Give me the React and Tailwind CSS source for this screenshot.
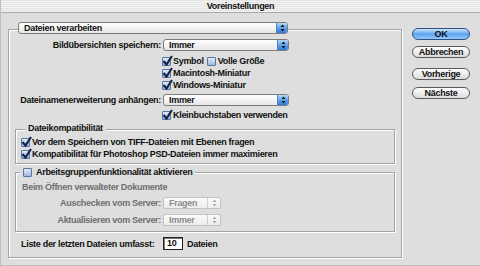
import React from 'react';

// --- Small Aqua-style controls ---
const Arrows = ({ color = '#111' }) => (
    <svg viewBox="0 0 5 8" className="w-[5px] h-[8px]">
        <path d="M2.5 0.5 L4.5 3 L0.5 3 Z" fill={color} />
        <path d="M2.5 7.5 L4.5 5 L0.5 5 Z" fill={color} />
    </svg>
);

const Popup = ({ label, width }) => (
    <div className={`flex h-[12px] ${width} rounded-[3px] border border-[#7c7c7c] bg-linear-to-b from-white to-[#e6e6e6] overflow-hidden`}>
        <span className="flex-1 pl-[5px] leading-[10px]">{label}</span>
        <span className="w-[11px] flex items-center justify-center bg-linear-to-b from-[#b7d8f8] via-[#5ea3ec] to-[#2f7ad8] border-l border-[#5d7fae]">
            <Arrows />
        </span>
    </div>
);

const DisabledPopup = ({ label }) => (
    <div className="flex h-[12px] w-[58px] rounded-[2px] border border-[#c2c2c2] bg-linear-to-b from-[#fbfbfb] to-[#ececec] overflow-hidden text-[#8c8c8c]">
        <span className="flex-1 pl-[5px] leading-[10px]">{label}</span>
        <span className="w-[13px] flex items-center justify-center border-l border-[#cfcfcf]">
            <Arrows color="#a8a8a8" />
        </span>
    </div>
);

const Check = ({ checked }) => (
    <span className="relative shrink-0 w-[9px] h-[9px] rounded-[1px] border border-[#56779f] bg-linear-to-b from-[#e3ecf9] to-[#9cb8e0]">
        {checked && (
            <svg viewBox="0 0 11 11" className="absolute -top-[3px] -left-[1px] w-[11px] h-[11px]">
                <path d="M1.5 6 L4.5 9.5 L10 1" fill="none" stroke="#14244f" strokeWidth="2.2" />
            </svg>
        )}
    </span>
);

const CheckRow = ({ checked, label }) => (
    <span className="flex items-center">
        <Check checked={checked} />
        <span className="ml-[2px] leading-[10px]">{label}</span>
    </span>
);

const Button = ({ label, primary }) => (
    <button
        className={
            primary
                ? 'h-[12px] w-[58px] rounded-full border border-[#2f4f86] bg-linear-to-b from-[#cfe6fd] via-[#5aa3ef] to-[#94c9fa] leading-[10px] font-bold'
                : 'h-[12px] w-[58px] rounded-full border border-[#5a5a5a] bg-linear-to-b from-white to-[#dcdcdc] leading-[10px] font-bold'
        }
    >
        {label}
    </button>
);

// --- Main Component ---
export default function App() {
    return (
        <div className="w-[480px] h-[266px] overflow-hidden flex flex-col bg-[#dedede] text-[9px] font-bold tracking-[-0.3px] text-[#111] border-l border-b border-[#bdbdbd] [font-family:'Liberation_Sans',Arial,sans-serif]">

            {/* --- Title bar --- */}
            <div className="h-[13px] shrink-0 flex items-center justify-center border-b border-[#a9a9a9] bg-[repeating-linear-gradient(0deg,#f3f3f3_0px,#f3f3f3_1px,#e4e4e4_1px,#e4e4e4_2px)]">
                <span className="leading-[10px] px-[3px]">Voreinstellungen</span>
            </div>

            <div className="flex pl-[7px] pt-[9px]">

                {/* --- Left: settings panel --- */}
                <div className="w-[394px] flex flex-col">
                    <div className="relative z-10 pl-[10px]">
                        <Popup label="Dateien verarbeiten" width="w-[270px]" />
                    </div>

                    <div className="-mt-[5px] border border-[#a2a2a2] shadow-[1px_1px_0_#fff,inset_1px_1px_0_#fff] pt-[9px] pb-[7px] flex flex-col">

                        <div className="flex items-center h-[12px]">
                            <span className="w-[152px] text-right leading-[10px]">Bildübersichten speichern:</span>
                            <span className="ml-[2px]"><Popup label="Immer" width="w-[126px]" /></span>
                        </div>

                        <div className="mt-[4px] pl-[153px] flex flex-col">
                            <div className="h-[12px] flex items-center gap-[3px]">
                                <CheckRow checked label="Symbol" />
                                <CheckRow label="Volle Größe" />
                            </div>
                            <div className="h-[12px] flex items-center"><CheckRow checked label="Macintosh-Miniatur" /></div>
                            <div className="h-[12px] flex items-center"><CheckRow checked label="Windows-Miniatur" /></div>
                        </div>

                        <div className="mt-[3px] flex items-center h-[12px]">
                            <span className="w-[152px] text-right leading-[10px] whitespace-nowrap">Dateinamenerweiterung anhängen:</span>
                            <span className="ml-[2px]"><Popup label="Immer" width="w-[126px]" /></span>
                        </div>

                        <div className="mt-[3px] pl-[153px] h-[12px] flex items-center">
                            <CheckRow checked label="Kleinbuchstaben verwenden" />
                        </div>

                        {/* Dateikompatibilität */}
                        <div className="mt-[2px] mx-[6px] flex flex-col">
                            <div className="relative z-10 h-[10px] pl-[10px] flex items-center">
                                <span className="px-[3px] bg-[#dedede] leading-[10px]">Dateikompatibilität</span>
                            </div>
                            <div className="-mt-[4px] border border-[#a2a2a2] shadow-[1px_1px_0_#fff,inset_1px_1px_0_#fff] pt-[6px] pb-[3px] pl-[5px] flex flex-col">
                                <div className="h-[12px] flex items-center"><CheckRow checked label="Vor dem Speichern von TIFF-Dateien mit Ebenen fragen" /></div>
                                <div className="h-[12px] flex items-center"><CheckRow checked label="Kompatibilität für Photoshop PSD-Dateien immer maximieren" /></div>
                            </div>
                        </div>

                        {/* Arbeitsgruppen */}
                        <div className="mt-[2px] mx-[6px] flex flex-col">
                            <div className="relative z-10 h-[12px] pl-[5px] flex items-center">
                                <span className="px-[3px] bg-[#dedede] flex items-center">
                                    <Check />
                                    <span className="ml-[4px] leading-[10px]">Arbeitsgruppenfunktionalität aktivieren</span>
                                </span>
                            </div>
                            <div className="-mt-[6px] border border-[#a2a2a2] shadow-[1px_1px_0_#fff,inset_1px_1px_0_#fff] pt-[9px] pb-[5px] flex flex-col">
                                <div className="h-[10px] pl-[6px] flex items-center text-[#6e6e6e] leading-[10px]">Beim Öffnen verwalteter Dokumente</div>
                                <div className="mt-[5px] flex items-center h-[12px] text-[#6e6e6e]">
                                    <span className="w-[145px] text-right leading-[10px]">Auschecken vom Server:</span>
                                    <span className="ml-[2px]"><DisabledPopup label="Fragen" /></span>
                                </div>
                                <div className="mt-[5px] flex items-center h-[12px] text-[#6e6e6e]">
                                    <span className="w-[145px] text-right leading-[10px]">Aktualisieren vom Server:</span>
                                    <span className="ml-[2px]"><DisabledPopup label="Immer" /></span>
                                </div>
                            </div>
                        </div>

                        <div className="mt-[5px] pl-[12px] h-[13px] flex items-center">
                            <span className="w-[142px] leading-[10px]">Liste der letzten Dateien umfasst:</span>
                            <span className="w-[20px] h-[13px] border border-[#222] bg-white shadow-[inset_1px_1px_0_#777] pl-[3px] leading-[11px]">10</span>
                            <span className="ml-[4px] leading-[10px]">Dateien</span>
                        </div>
                    </div>
                </div>

                {/* --- Right: buttons --- */}
                <div className="ml-[10px] w-[58px] pt-[6px] flex flex-col">
                    <Button primary label="OK" />
                    <div className="mt-[6px]"><Button label="Abbrechen" /></div>
                    <div className="mt-[8px]"><Button label="Vorherige" /></div>
                    <div className="mt-[6px]"><Button label="Nächste" /></div>
                </div>
            </div>
        </div>
    );
}
